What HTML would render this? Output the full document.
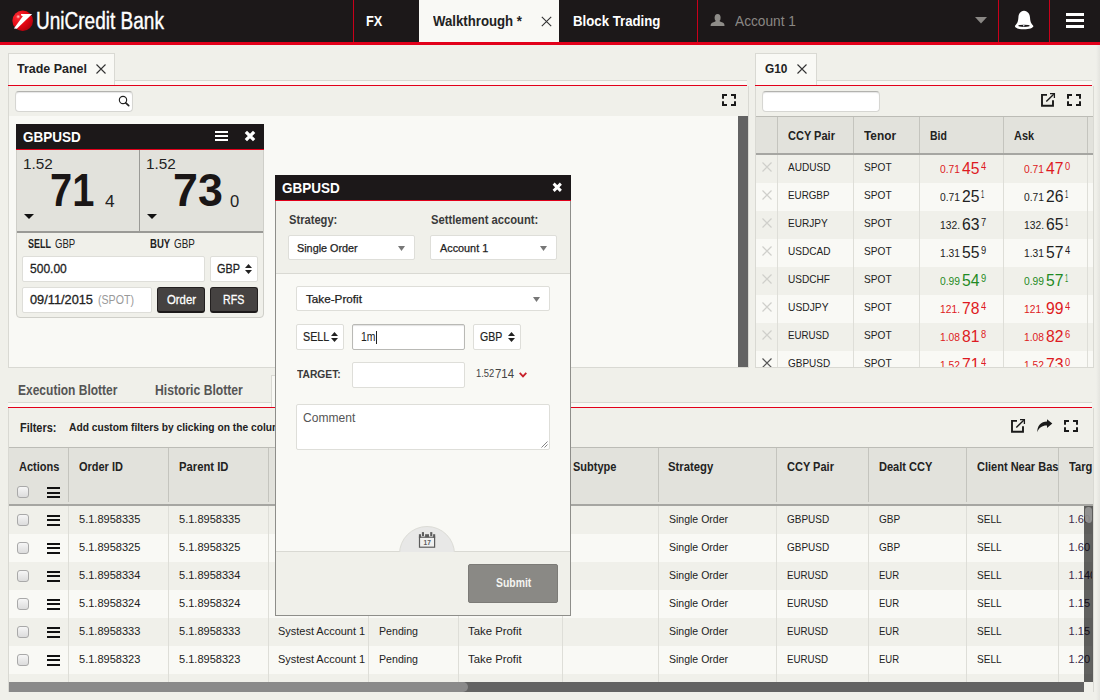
<!DOCTYPE html><html><head><meta charset="utf-8"><title>UniCredit Bank FX</title><style>*{margin:0;padding:0}html,body{width:1100px;height:700px;overflow:hidden;background:#f0f0ea;font-family:"Liberation Sans",sans-serif}
.r{position:absolute;display:block}.t{position:absolute;white-space:nowrap;transform-origin:0 50%;display:block}
.inp{background:#fff;border:1px solid #d6d6d2;border-top-color:#b2b2ae;border-radius:4px;box-sizing:border-box;box-shadow:inset 0 1px 1px rgba(0,0,0,.1)}
.inp2{background:#fff;border:1px solid #deded9;border-radius:2px;box-sizing:border-box}
.btn{background:#454241;border-radius:3px;box-sizing:border-box;border:1px solid #221f1f;border-bottom:2px solid #1c1919}
.chk{width:12px;height:12px;box-sizing:border-box;border:1px solid #a9a9a9;border-radius:3px;background:linear-gradient(#f6f6f6,#dcdcdc)}
</style></head><body>
<div class="r" style="left:0px;top:0px;width:1100px;height:42px;background:#1c1819;"></div>
<div class="r" style="left:0px;top:42px;width:1100px;height:3px;background:#e2001a;"></div>
<div class="r" style="left:353px;top:0px;width:1px;height:42px;background:#c8001a;"></div>
<div class="r" style="left:697px;top:0px;width:1px;height:42px;background:#c8001a;"></div>
<div class="r" style="left:998px;top:0px;width:1px;height:42px;background:#c8001a;"></div>
<div class="r" style="left:1049px;top:0px;width:1px;height:42px;background:#c8001a;"></div>
<div class="r" style="left:419px;top:0px;width:140px;height:42px;background:#f9f9f5;"></div>
<svg class="r" style="left:11px;top:9px" width="24" height="24" viewBox="0 0 24 24"><defs><radialGradient id="lg" cx="0.28" cy="0.3" r="0.85"><stop offset="0" stop-color="#ffd0d0"/><stop offset="0.12" stop-color="#f5232c"/><stop offset="0.55" stop-color="#e30613"/><stop offset="1" stop-color="#a8000c"/></radialGradient></defs><circle cx="11.7" cy="11.8" r="10.3" fill="url(#lg)"/><path d="M10.1 5.1L21.2 4.9L5.8 19.7L2.9 19.4L11.8 7.3L9.9 6.2Z" fill="#fff"/></svg>
<span class="t" style="left:35.60px;top:10.13px;font-size:23px;line-height:23px;color:#fff;transform:scaleX(0.8271);-webkit-text-stroke:0.4px #fff;">UniCredit Bank</span>
<span class="t" style="left:366.20px;top:14.15px;font-size:14px;line-height:14px;color:#fff;font-weight:bold;transform:scaleX(0.9119);">FX</span>
<span class="t" style="left:433.00px;top:14.15px;font-size:14px;line-height:14px;color:#222;font-weight:bold;transform:scaleX(0.9430);">Walkthrough *</span>
<svg class="r" style="left:541px;top:16px" width="11" height="11" viewBox="0 0 11 11"><path d="M0.8 0.8L10.2 10.2M10.2 0.8L0.8 10.2" stroke="#333" stroke-width="1.1" fill="none"/></svg>
<span class="t" style="left:572.60px;top:14.15px;font-size:14px;line-height:14px;color:#fff;font-weight:bold;transform:scaleX(0.9442);">Block Trading</span>
<svg class="r" style="left:710px;top:13px" width="15" height="14" viewBox="0 0 15 14"><ellipse cx="7.600" cy="4.700" rx="3" ry="3.800" fill="#8e8c88"/><path d="M0.600 13C0.600 10.500 1.500 9.800 3.500 9.200C5.500 8.600 6.100 8.200 6.100 7H9.100C9.100 8.200 9.900 8.600 11.900 9.200C13.900 9.800 14.500 10.500 14.500 13Z" fill="#8e8c88"/></svg>
<span class="t" style="left:734.60px;top:12.50px;font-size:15px;line-height:15px;color:#8a8784;transform:scaleX(0.9132);">Account 1</span>
<svg class="r" style="left:975px;top:17px" width="12" height="7" viewBox="0 0 12 7"><path d="M0 0H12L6 6.6Z" fill="#8a8784"/></svg>
<svg class="r" style="left:1014px;top:10px" width="20" height="20" viewBox="0 0 20 20"><path d="M10 0.700C6 1.300 4.600 4 4.400 7.500C4.200 11 3.500 13.500 0.900 16C0.900 18 5 19.300 10 19.300C15 19.300 19.400 18 19.400 16C16.800 13.500 16.200 11 16 7.500C15.800 4 14 1.300 10 0.700Z" fill="#fff"/><ellipse cx="10" cy="15.800" rx="5.700" ry="1.100" fill="#1c1819"/><circle cx="9.800" cy="15.700" r="0.800" fill="#e8f0ff"/></svg>
<div class="r" style="left:1066px;top:13px;width:18px;height:3.2px;background:#fff;"></div>
<div class="r" style="left:1066px;top:19px;width:18px;height:3.2px;background:#fff;"></div>
<div class="r" style="left:1066px;top:25px;width:18px;height:3.2px;background:#fff;"></div>
<div class="r" style="left:8px;top:80px;width:739px;height:6px;background:#f9f9f5;border-top:1px solid #d9d9d3;box-sizing:border-box;"></div>
<div class="r" style="left:8px;top:86px;width:741px;height:282px;background:#f9f9f5;border:1px solid #d9d9d3;border-top:none;box-sizing:border-box;"></div>
<div class="r" style="left:8px;top:53px;width:107px;height:33px;background:#f9f9f5;border:1px solid #d9d9d3;border-bottom:none;box-sizing:border-box;"></div>
<span class="t" style="left:17.40px;top:61.80px;font-size:13px;line-height:13px;color:#222;font-weight:bold;transform:scaleX(0.9589);">Trade Panel</span>
<svg class="r" style="left:96px;top:63.5px" width="10" height="10" viewBox="0 0 10 10"><path d="M0.5 0.5L9.5 9.5M9.5 0.500L0.500 9.500" stroke="#333" stroke-width="1.1" fill="none"/></svg>
<div class="r" style="left:8px;top:85px;width:739px;height:1px;background:#e2001a;"></div>
<div class="r" style="left:9px;top:86px;width:739px;height:30px;background:#f0f0ea;"></div>
<div class="r inp" style="left:15px;top:91px;width:118px;height:21px"></div>
<svg class="r" style="left:118px;top:95px" width="12" height="12" viewBox="0 0 12 12"><circle cx="5" cy="5" r="3.650" stroke="#222" stroke-width="1.150" fill="none"/><path d="M7.700 7.800L10.700 10.600" stroke="#222" stroke-width="1.700" stroke-linecap="round"/></svg>
<svg class="r" style="left:722px;top:94px" width="14" height="12" viewBox="0 0 14 12"><path d="M1 4.750V1H5M9 1H13V4.750M13 7.25V11H9M5 11H1V7.25" stroke="#1a1a1a" stroke-width="2" fill="none"/></svg>
<div class="r" style="left:738px;top:116px;width:10px;height:251px;background:#636363;"></div>
<div class="r" style="left:16px;top:124px;width:248px;height:194px;background:#f0f0ea;border:1px solid #cfcfc9;box-sizing:border-box;border-radius:0 0 4px 4px;"></div>
<div class="r" style="left:16px;top:124px;width:248px;height:25px;background:#1c1819;"></div>
<div class="r" style="left:16px;top:149px;width:248px;height:1px;background:#e2001a;"></div>
<div class="r" style="left:17px;top:150px;width:246px;height:81px;background:#e2e2dc;"></div>
<div class="r" style="left:139px;top:150px;width:1px;height:81px;background:#9a9a96;"></div>
<div class="r" style="left:17px;top:230.5px;width:246px;height:2px;background:#9a9a96;"></div>
<span class="t" style="left:23.20px;top:129.65px;font-size:14px;line-height:14px;color:#fff;font-weight:bold;transform:scaleX(0.9653);">GBPUSD</span>
<div class="r" style="left:215px;top:131px;width:13px;height:2px;background:#fff;"></div>
<div class="r" style="left:215px;top:135px;width:13px;height:2px;background:#fff;"></div>
<div class="r" style="left:215px;top:139px;width:13px;height:2px;background:#fff;"></div>
<svg class="r" style="left:244px;top:130px" width="12" height="12" viewBox="0 0 11 11"><path d="M1.700 1.700L9.300 9.300M9.300 1.700L1.700 9.300" stroke="#fff" stroke-width="3" fill="none"/></svg>
<span class="t" style="left:23.20px;top:156.58px;font-size:14.2px;line-height:14.2px;color:#222;transform:scaleX(1.0787);">1.52</span>
<span class="t" style="left:50.00px;top:168.21px;font-size:45.7px;line-height:45.7px;color:#1a1616;font-weight:bold;transform:scaleX(0.8718);">71</span>
<span class="t" style="left:105.40px;top:192.51px;font-size:17px;line-height:17px;color:#222;transform:scaleX(1.0172);">4</span>
<svg class="r" style="left:24px;top:214px" width="10" height="5" viewBox="0 0 10 5"><path d="M0 0H10L5 5Z" fill="#111"/></svg>
<span class="t" style="left:146.20px;top:156.58px;font-size:14.2px;line-height:14.2px;color:#222;transform:scaleX(1.0787);">1.52</span>
<span class="t" style="left:172.60px;top:168.21px;font-size:45.7px;line-height:45.7px;color:#1a1616;font-weight:bold;transform:scaleX(0.9801);">73</span>
<span class="t" style="left:229.60px;top:192.51px;font-size:17px;line-height:17px;color:#222;transform:scaleX(0.9748);">0</span>
<svg class="r" style="left:147px;top:214px" width="10" height="5" viewBox="0 0 10 5"><path d="M0 0H10L5 5Z" fill="#111"/></svg>
<span class="t" style="left:27.60px;top:238.44px;font-size:12px;line-height:12px;color:#222;font-weight:bold;transform:scaleX(0.7462);">SELL</span>
<span class="t" style="left:54.80px;top:238.44px;font-size:12px;line-height:12px;color:#222;transform:scaleX(0.7980);">GBP</span>
<span class="t" style="left:150.30px;top:238.44px;font-size:12px;line-height:12px;color:#222;font-weight:bold;transform:scaleX(0.7980);">BUY</span>
<span class="t" style="left:174.30px;top:238.44px;font-size:12px;line-height:12px;color:#222;transform:scaleX(0.8178);">GBP</span>
<div class="r inp2" style="left:22px;top:256px;width:183px;height:26px"></div>
<span class="t" style="left:29.70px;top:262.20px;font-size:13px;line-height:13px;color:#222;transform:scaleX(0.9258);-webkit-text-stroke:0.3px;">500.00</span>
<div class="r inp2" style="left:210px;top:256px;width:48px;height:26px"></div>
<span class="t" style="left:216.50px;top:262.20px;font-size:13px;line-height:13px;color:#222;transform:scaleX(0.8383);-webkit-text-stroke:0.3px;">GBP</span>
<svg class="r" style="left:245px;top:263.6px" width="7" height="10" viewBox="0 0 7 10"><path d="M0 4L3.500 0L7 4ZM0 6L3.500 10L7 6Z" fill="#222"/></svg>
<div class="r inp2" style="left:22px;top:287px;width:130px;height:26px"></div>
<span class="t" style="left:29.50px;top:293.30px;font-size:13px;line-height:13px;color:#222;transform:scaleX(0.9825);-webkit-text-stroke:0.3px;">09/11/2015</span>
<span class="t" style="left:97.50px;top:293.30px;font-size:13px;line-height:13px;color:#999;transform:scaleX(0.8170);">(SPOT)</span>
<div class="r btn" style="left:157px;top:287px;width:48px;height:26px"></div>
<div class="r btn" style="left:210px;top:287px;width:48px;height:26px"></div>
<span class="t" style="left:166.50px;top:293.30px;font-size:13px;line-height:13px;color:#fff;transform:scaleX(0.8722);-webkit-text-stroke:0.3px;">Order</span>
<span class="t" style="left:223.30px;top:293.30px;font-size:13px;line-height:13px;color:#fff;transform:scaleX(0.8154);-webkit-text-stroke:0.3px;">RFS</span>
<div class="r" style="left:755px;top:80px;width:337px;height:6px;background:#f9f9f5;border-top:1px solid #d9d9d3;box-sizing:border-box;"></div>
<div class="r" style="left:755px;top:86px;width:339px;height:282px;background:#f9f9f5;border:1px solid #d9d9d3;border-top:none;box-sizing:border-box;"></div>
<div class="r" style="left:755px;top:53px;width:62px;height:33px;background:#f9f9f5;border:1px solid #d9d9d3;border-bottom:none;box-sizing:border-box;"></div>
<span class="t" style="left:764.60px;top:61.80px;font-size:13px;line-height:13px;color:#222;font-weight:bold;transform:scaleX(0.9120);">G10</span>
<svg class="r" style="left:797px;top:63.5px" width="10" height="10" viewBox="0 0 10 10"><path d="M0.5 0.5L9.5 9.5M9.5 0.500L0.500 9.500" stroke="#333" stroke-width="1.1" fill="none"/></svg>
<div class="r" style="left:755px;top:85px;width:337px;height:1px;background:#e2001a;"></div>
<div class="r" style="left:756px;top:86px;width:337px;height:30px;background:#f0f0ea;"></div>
<div class="r inp" style="left:762px;top:91px;width:118px;height:21px"></div>
<svg class="r" style="left:1040px;top:92px" width="16" height="16" viewBox="0 0 16 16"><path d="M7 2.900H2V13.750H13V8.250" stroke="#1a1a1a" stroke-width="1.900" fill="none"/><path d="M6.300 9.500L13.700 2.300" stroke="#1a1a1a" stroke-width="1.400"/><path d="M10 1.600H14.400V5.900" stroke="#1a1a1a" stroke-width="1.300" fill="none"/></svg>
<svg class="r" style="left:1067px;top:94px" width="14" height="12" viewBox="0 0 14 12"><path d="M1 4.750V1H5M9 1H13V4.750M13 7.25V11H9M5 11H1V7.25" stroke="#1a1a1a" stroke-width="2" fill="none"/></svg>
<div class="r" style="left:756px;top:116px;width:337px;height:37px;background:#e2e2dc;"></div>
<div class="r" style="left:756px;top:116px;width:337px;height:1px;background:#bcbcb6;"></div>
<div class="r" style="left:756px;top:153px;width:337px;height:2px;background:#a6a6a2;"></div>
<div class="r" style="left:777px;top:117px;width:1px;height:36px;background:#c4c4be;"></div>
<div class="r" style="left:853px;top:117px;width:1px;height:36px;background:#c4c4be;"></div>
<div class="r" style="left:919px;top:117px;width:1px;height:36px;background:#c4c4be;"></div>
<div class="r" style="left:1003px;top:117px;width:1px;height:36px;background:#c4c4be;"></div>
<div class="r" style="left:1087px;top:117px;width:1px;height:36px;background:#c4c4be;"></div>
<span class="t" style="left:787.60px;top:129.84px;font-size:12px;line-height:12px;color:#222;font-weight:bold;transform:scaleX(0.9174);">CCY Pair</span>
<span class="t" style="left:863.50px;top:129.84px;font-size:12px;line-height:12px;color:#222;font-weight:bold;transform:scaleX(0.9865);">Tenor</span>
<span class="t" style="left:929.70px;top:129.84px;font-size:12px;line-height:12px;color:#222;font-weight:bold;transform:scaleX(0.8699);">Bid</span>
<span class="t" style="left:1013.50px;top:129.84px;font-size:12px;line-height:12px;color:#222;font-weight:bold;transform:scaleX(0.9091);">Ask</span>
<div class="r" style="left:756px;top:155px;width:337px;height:212px;overflow:hidden">
<div class="r" style="left:0px;top:0px;width:337px;height:28px;background:#f0f0ea;"></div>
<svg class="r" style="left:6px;top:7px" width="10" height="10" viewBox="0 0 10 10"><path d="M0.500 0.500L9.500 9.500M9.500 0.500L0.500 9.500" stroke="#cfcfcb" stroke-width="1.200" fill="none"/></svg>
<span class="t" style="left:31.60px;top:7.29px;font-size:11px;line-height:11px;color:#222;transform:scaleX(0.9127);">AUDUSD</span>
<span class="t" style="left:107.60px;top:7.29px;font-size:11px;line-height:11px;color:#222;transform:scaleX(0.9212);">SPOT</span>
<span class="t" style="left:184.30px;top:9.98px;font-size:10.3px;line-height:10.3px;color:#de1a22;transform:scaleX(0.9969);">0.71</span>
<span class="t" style="left:206.10px;top:6.01px;font-size:15.7px;line-height:15.7px;color:#de1a22;">45</span>
<span class="t" style="left:224.50px;top:6.67px;font-size:10.2px;line-height:10.2px;color:#de1a22;transform:scaleX(0.9143);">4</span>
<span class="t" style="left:268.30px;top:9.98px;font-size:10.3px;line-height:10.3px;color:#de1a22;transform:scaleX(0.9969);">0.71</span>
<span class="t" style="left:290.10px;top:6.01px;font-size:15.7px;line-height:15.7px;color:#de1a22;">47</span>
<span class="t" style="left:308.50px;top:6.67px;font-size:10.2px;line-height:10.2px;color:#de1a22;transform:scaleX(0.9143);">0</span>
<div class="r" style="left:0px;top:28px;width:337px;height:28px;background:#f9f9f5;"></div>
<svg class="r" style="left:6px;top:35px" width="10" height="10" viewBox="0 0 10 10"><path d="M0.500 0.500L9.500 9.500M9.500 0.500L0.500 9.500" stroke="#cfcfcb" stroke-width="1.200" fill="none"/></svg>
<span class="t" style="left:31.60px;top:35.29px;font-size:11px;line-height:11px;color:#222;transform:scaleX(0.8920);">EURGBP</span>
<span class="t" style="left:107.60px;top:35.29px;font-size:11px;line-height:11px;color:#222;transform:scaleX(0.9212);">SPOT</span>
<span class="t" style="left:184.30px;top:37.98px;font-size:10.3px;line-height:10.3px;color:#222;transform:scaleX(0.9969);">0.71</span>
<span class="t" style="left:206.10px;top:34.01px;font-size:15.7px;line-height:15.7px;color:#222;">25</span>
<span class="t" style="left:224.50px;top:34.67px;font-size:10.2px;line-height:10.2px;color:#222;transform:scaleX(0.5626);">1</span>
<span class="t" style="left:268.30px;top:37.98px;font-size:10.3px;line-height:10.3px;color:#222;transform:scaleX(0.9969);">0.71</span>
<span class="t" style="left:290.10px;top:34.01px;font-size:15.7px;line-height:15.7px;color:#222;">26</span>
<span class="t" style="left:308.50px;top:34.67px;font-size:10.2px;line-height:10.2px;color:#222;transform:scaleX(0.5626);">1</span>
<div class="r" style="left:0px;top:56px;width:337px;height:28px;background:#f0f0ea;"></div>
<svg class="r" style="left:6px;top:63px" width="10" height="10" viewBox="0 0 10 10"><path d="M0.500 0.500L9.500 9.500M9.500 0.500L0.500 9.500" stroke="#cfcfcb" stroke-width="1.200" fill="none"/></svg>
<span class="t" style="left:31.60px;top:63.29px;font-size:11px;line-height:11px;color:#222;transform:scaleX(0.9164);">EURJPY</span>
<span class="t" style="left:107.60px;top:63.29px;font-size:11px;line-height:11px;color:#222;transform:scaleX(0.9212);">SPOT</span>
<span class="t" style="left:184.30px;top:65.98px;font-size:10.3px;line-height:10.3px;color:#222;transform:scaleX(0.9969);">132.</span>
<span class="t" style="left:206.10px;top:62.01px;font-size:15.7px;line-height:15.7px;color:#222;">63</span>
<span class="t" style="left:224.50px;top:62.67px;font-size:10.2px;line-height:10.2px;color:#222;transform:scaleX(0.9143);">7</span>
<span class="t" style="left:268.30px;top:65.98px;font-size:10.3px;line-height:10.3px;color:#222;transform:scaleX(0.9969);">132.</span>
<span class="t" style="left:290.10px;top:62.01px;font-size:15.7px;line-height:15.7px;color:#222;">65</span>
<span class="t" style="left:308.50px;top:62.67px;font-size:10.2px;line-height:10.2px;color:#222;transform:scaleX(0.5626);">1</span>
<div class="r" style="left:0px;top:84px;width:337px;height:28px;background:#f9f9f5;"></div>
<svg class="r" style="left:6px;top:91px" width="10" height="10" viewBox="0 0 10 10"><path d="M0.500 0.500L9.500 9.500M9.500 0.500L0.500 9.500" stroke="#cfcfcb" stroke-width="1.200" fill="none"/></svg>
<span class="t" style="left:31.60px;top:91.29px;font-size:11px;line-height:11px;color:#222;transform:scaleX(0.9132);">USDCAD</span>
<span class="t" style="left:107.60px;top:91.29px;font-size:11px;line-height:11px;color:#222;transform:scaleX(0.9212);">SPOT</span>
<span class="t" style="left:184.30px;top:93.98px;font-size:10.3px;line-height:10.3px;color:#222;transform:scaleX(0.9969);">1.31</span>
<span class="t" style="left:206.10px;top:90.01px;font-size:15.7px;line-height:15.7px;color:#222;">55</span>
<span class="t" style="left:224.50px;top:90.67px;font-size:10.2px;line-height:10.2px;color:#222;transform:scaleX(0.9143);">9</span>
<span class="t" style="left:268.30px;top:93.98px;font-size:10.3px;line-height:10.3px;color:#222;transform:scaleX(0.9969);">1.31</span>
<span class="t" style="left:290.10px;top:90.01px;font-size:15.7px;line-height:15.7px;color:#222;">57</span>
<span class="t" style="left:308.50px;top:90.67px;font-size:10.2px;line-height:10.2px;color:#222;transform:scaleX(0.9143);">4</span>
<div class="r" style="left:0px;top:112px;width:337px;height:28px;background:#f0f0ea;"></div>
<svg class="r" style="left:6px;top:119px" width="10" height="10" viewBox="0 0 10 10"><path d="M0.500 0.500L9.500 9.500M9.500 0.500L0.500 9.500" stroke="#cfcfcb" stroke-width="1.200" fill="none"/></svg>
<span class="t" style="left:31.60px;top:119.29px;font-size:11px;line-height:11px;color:#222;transform:scaleX(0.9153);">USDCHF</span>
<span class="t" style="left:107.60px;top:119.29px;font-size:11px;line-height:11px;color:#222;transform:scaleX(0.9212);">SPOT</span>
<span class="t" style="left:184.30px;top:121.98px;font-size:10.3px;line-height:10.3px;color:#1f8a24;transform:scaleX(0.9969);">0.99</span>
<span class="t" style="left:206.10px;top:118.01px;font-size:15.7px;line-height:15.7px;color:#1f8a24;">54</span>
<span class="t" style="left:224.50px;top:118.67px;font-size:10.2px;line-height:10.2px;color:#1f8a24;transform:scaleX(0.9143);">9</span>
<span class="t" style="left:268.30px;top:121.98px;font-size:10.3px;line-height:10.3px;color:#1f8a24;transform:scaleX(0.9969);">0.99</span>
<span class="t" style="left:290.10px;top:118.01px;font-size:15.7px;line-height:15.7px;color:#1f8a24;">57</span>
<span class="t" style="left:308.50px;top:118.67px;font-size:10.2px;line-height:10.2px;color:#1f8a24;transform:scaleX(0.5626);">1</span>
<div class="r" style="left:0px;top:140px;width:337px;height:28px;background:#f9f9f5;"></div>
<svg class="r" style="left:6px;top:147px" width="10" height="10" viewBox="0 0 10 10"><path d="M0.500 0.500L9.500 9.500M9.500 0.500L0.500 9.500" stroke="#cfcfcb" stroke-width="1.200" fill="none"/></svg>
<span class="t" style="left:31.60px;top:147.29px;font-size:11px;line-height:11px;color:#222;transform:scaleX(0.9329);">USDJPY</span>
<span class="t" style="left:107.60px;top:147.29px;font-size:11px;line-height:11px;color:#222;transform:scaleX(0.9212);">SPOT</span>
<span class="t" style="left:184.30px;top:149.98px;font-size:10.3px;line-height:10.3px;color:#de1a22;transform:scaleX(0.9969);">121.</span>
<span class="t" style="left:206.10px;top:146.01px;font-size:15.7px;line-height:15.7px;color:#de1a22;">78</span>
<span class="t" style="left:224.50px;top:146.67px;font-size:10.2px;line-height:10.2px;color:#de1a22;transform:scaleX(0.9143);">4</span>
<span class="t" style="left:268.30px;top:149.98px;font-size:10.3px;line-height:10.3px;color:#de1a22;transform:scaleX(0.9969);">121.</span>
<span class="t" style="left:290.10px;top:146.01px;font-size:15.7px;line-height:15.7px;color:#de1a22;">99</span>
<span class="t" style="left:308.50px;top:146.67px;font-size:10.2px;line-height:10.2px;color:#de1a22;transform:scaleX(0.9143);">4</span>
<div class="r" style="left:0px;top:168px;width:337px;height:28px;background:#f0f0ea;"></div>
<svg class="r" style="left:6px;top:175px" width="10" height="10" viewBox="0 0 10 10"><path d="M0.500 0.500L9.500 9.500M9.500 0.500L0.500 9.500" stroke="#cfcfcb" stroke-width="1.200" fill="none"/></svg>
<span class="t" style="left:31.60px;top:175.29px;font-size:11px;line-height:11px;color:#222;transform:scaleX(0.8833);">EURUSD</span>
<span class="t" style="left:107.60px;top:175.29px;font-size:11px;line-height:11px;color:#222;transform:scaleX(0.9212);">SPOT</span>
<span class="t" style="left:184.30px;top:177.98px;font-size:10.3px;line-height:10.3px;color:#de1a22;transform:scaleX(0.9969);">1.08</span>
<span class="t" style="left:206.10px;top:174.01px;font-size:15.7px;line-height:15.7px;color:#de1a22;">81</span>
<span class="t" style="left:224.50px;top:174.67px;font-size:10.2px;line-height:10.2px;color:#de1a22;transform:scaleX(0.9143);">8</span>
<span class="t" style="left:268.30px;top:177.98px;font-size:10.3px;line-height:10.3px;color:#de1a22;transform:scaleX(0.9969);">1.08</span>
<span class="t" style="left:290.10px;top:174.01px;font-size:15.7px;line-height:15.7px;color:#de1a22;">82</span>
<span class="t" style="left:308.50px;top:174.67px;font-size:10.2px;line-height:10.2px;color:#de1a22;transform:scaleX(0.9143);">6</span>
<div class="r" style="left:0px;top:196px;width:337px;height:28px;background:#f9f9f5;"></div>
<svg class="r" style="left:6px;top:203px" width="10" height="10" viewBox="0 0 10 10"><path d="M0.500 0.500L9.500 9.500M9.500 0.500L0.500 9.500" stroke="#555" stroke-width="1.200" fill="none"/></svg>
<span class="t" style="left:31.60px;top:203.29px;font-size:11px;line-height:11px;color:#222;transform:scaleX(0.9074);">GBPUSD</span>
<span class="t" style="left:107.60px;top:203.29px;font-size:11px;line-height:11px;color:#222;transform:scaleX(0.9212);">SPOT</span>
<span class="t" style="left:184.30px;top:205.98px;font-size:10.3px;line-height:10.3px;color:#de1a22;transform:scaleX(0.9969);">1.52</span>
<span class="t" style="left:206.10px;top:202.01px;font-size:15.7px;line-height:15.7px;color:#de1a22;">71</span>
<span class="t" style="left:224.50px;top:202.67px;font-size:10.2px;line-height:10.2px;color:#de1a22;transform:scaleX(0.9143);">4</span>
<span class="t" style="left:268.30px;top:205.98px;font-size:10.3px;line-height:10.3px;color:#de1a22;transform:scaleX(0.9969);">1.52</span>
<span class="t" style="left:290.10px;top:202.01px;font-size:15.7px;line-height:15.7px;color:#de1a22;">73</span>
<span class="t" style="left:308.50px;top:202.67px;font-size:10.2px;line-height:10.2px;color:#de1a22;transform:scaleX(0.9143);">0</span>
<div class="r" style="left:21px;top:0px;width:1px;height:213px;background:#deded8;"></div>
<div class="r" style="left:97px;top:0px;width:1px;height:213px;background:#deded8;"></div>
<div class="r" style="left:163px;top:0px;width:1px;height:213px;background:#deded8;"></div>
<div class="r" style="left:247px;top:0px;width:1px;height:213px;background:#deded8;"></div>
<div class="r" style="left:331px;top:0px;width:1px;height:213px;background:#deded8;"></div>
</div>
<div class="r" style="left:8px;top:402px;width:1084px;height:6px;background:#f9f9f5;border-top:1px solid #d9d9d3;box-sizing:border-box;"></div>
<div class="r" style="left:271px;top:375px;width:40px;height:33px;background:#f9f9f5;border:1px solid #d9d9d3;border-bottom:none;box-sizing:border-box;"></div>
<span class="t" style="left:17.60px;top:383.25px;font-size:14px;line-height:14px;color:#555;font-weight:bold;transform:scaleX(0.8578);">Execution Blotter</span>
<span class="t" style="left:155.20px;top:383.25px;font-size:14px;line-height:14px;color:#555;font-weight:bold;transform:scaleX(0.8682);">Historic Blotter</span>
<div class="r" style="left:8px;top:407px;width:1084px;height:1px;background:#e2001a;"></div>
<div class="r" style="left:8px;top:408px;width:1086px;height:284px;background:#f0f0ea;border-left:1px solid #d9d9d3;border-right:1px solid #d9d9d3;box-sizing:border-box;"></div>
<span class="t" style="left:19.60px;top:421.84px;font-size:12px;line-height:12px;color:#222;font-weight:bold;transform:scaleX(0.9100);">Filters:</span>
<span class="t" style="left:69.30px;top:422.27px;font-size:11.5px;line-height:11.5px;color:#222;font-weight:bold;transform:scaleX(0.8899);">Add custom filters by clicking on the column</span>
<svg class="r" style="left:1010px;top:418px" width="16" height="16" viewBox="0 0 16 16"><path d="M7 2.900H2V13.750H13V8.250" stroke="#1a1a1a" stroke-width="1.900" fill="none"/><path d="M6.300 9.500L13.700 2.300" stroke="#1a1a1a" stroke-width="1.400"/><path d="M10 1.600H14.400V5.900" stroke="#1a1a1a" stroke-width="1.300" fill="none"/></svg>
<svg class="r" style="left:1037px;top:419px" width="16" height="14" viewBox="0 0 16 14"><path d="M10 0.200L15.300 4.600L10 9V6.600C5.500 6.400 2 8.500 0.300 13.300C0 7 4 2.800 10 2.600Z" fill="#1a1a1a"/></svg>
<svg class="r" style="left:1064px;top:420px" width="14" height="12" viewBox="0 0 14 12"><path d="M1 4.750V1H5M9 1H13V4.750M13 7.25V11H9M5 11H1V7.25" stroke="#1a1a1a" stroke-width="2" fill="none"/></svg>
<div class="r" style="left:9px;top:447px;width:1084px;height:57px;background:#e2e2dc;"></div>
<div class="r" style="left:9px;top:447px;width:1084px;height:1px;background:#bcbcb6;"></div>
<div class="r" style="left:9px;top:504px;width:1084px;height:2px;background:#a6a6a2;"></div>
<div class="r" style="left:68px;top:448px;width:1px;height:54px;background:#c4c4be;"></div>
<div class="r" style="left:168px;top:448px;width:1px;height:54px;background:#c4c4be;"></div>
<div class="r" style="left:268px;top:448px;width:1px;height:54px;background:#c4c4be;"></div>
<div class="r" style="left:368px;top:448px;width:1px;height:54px;background:#c4c4be;"></div>
<div class="r" style="left:458px;top:448px;width:1px;height:54px;background:#c4c4be;"></div>
<div class="r" style="left:562px;top:448px;width:1px;height:54px;background:#c4c4be;"></div>
<div class="r" style="left:658px;top:448px;width:1px;height:54px;background:#c4c4be;"></div>
<div class="r" style="left:776px;top:448px;width:1px;height:54px;background:#c4c4be;"></div>
<div class="r" style="left:868px;top:448px;width:1px;height:54px;background:#c4c4be;"></div>
<div class="r" style="left:966px;top:448px;width:1px;height:54px;background:#c4c4be;"></div>
<div class="r" style="left:1058px;top:448px;width:1px;height:54px;background:#c4c4be;"></div>
<span class="t" style="left:18.60px;top:460.54px;font-size:12px;line-height:12px;color:#222;font-weight:bold;transform:scaleX(0.9182);">Actions</span>
<span class="t" style="left:78.60px;top:460.54px;font-size:12px;line-height:12px;color:#222;font-weight:bold;transform:scaleX(0.9146);">Order ID</span>
<span class="t" style="left:178.60px;top:460.54px;font-size:12px;line-height:12px;color:#222;font-weight:bold;transform:scaleX(0.9376);">Parent ID</span>
<span class="t" style="left:572.60px;top:460.54px;font-size:12px;line-height:12px;color:#222;font-weight:bold;transform:scaleX(0.9173);">Subtype</span>
<span class="t" style="left:668.20px;top:460.54px;font-size:12px;line-height:12px;color:#222;font-weight:bold;transform:scaleX(0.9437);">Strategy</span>
<span class="t" style="left:786.60px;top:460.54px;font-size:12px;line-height:12px;color:#222;font-weight:bold;transform:scaleX(0.9174);">CCY Pair</span>
<span class="t" style="left:878.60px;top:460.54px;font-size:12px;line-height:12px;color:#222;font-weight:bold;transform:scaleX(0.9207);">Dealt CCY</span>
<span class="t" style="left:976.60px;top:460.54px;font-size:12px;line-height:12px;color:#222;font-weight:bold;transform:scaleX(0.9178);">Client Near Bas</span>
<span class="t" style="left:1068.60px;top:460.54px;font-size:12px;line-height:12px;color:#222;font-weight:bold;transform:scaleX(0.9313);">Targ</span>
<div class="r chk" style="left:17px;top:486px"></div>
<div class="r" style="left:47px;top:487.0px;width:13px;height:2.2px;background:#111;"></div>
<div class="r" style="left:47px;top:491.5px;width:13px;height:2.2px;background:#111;"></div>
<div class="r" style="left:47px;top:496.0px;width:13px;height:2.2px;background:#111;"></div>
<div class="r" style="left:9px;top:506px;width:1083px;height:176px;overflow:hidden">
<div class="r" style="left:0px;top:0px;width:1083px;height:28px;background:#f0f0ea;"></div>
<div class="r chk" style="left:8px;top:8px"></div>
<div class="r" style="left:38px;top:8.5px;width:13px;height:2.2px;background:#111;"></div>
<div class="r" style="left:38px;top:13.0px;width:13px;height:2.2px;background:#111;"></div>
<div class="r" style="left:38px;top:17.5px;width:13px;height:2.2px;background:#111;"></div>
<span class="t" style="left:69.60px;top:8.29px;font-size:11px;line-height:11px;color:#222;transform:scaleX(1.0033);">5.1.8958335</span>
<span class="t" style="left:169.60px;top:8.29px;font-size:11px;line-height:11px;color:#222;transform:scaleX(1.0033);">5.1.8958335</span>
<span class="t" style="left:269.40px;top:8.29px;font-size:11px;line-height:11px;color:#222;transform:scaleX(0.9961);">Systest Account 1</span>
<span class="t" style="left:369.50px;top:8.29px;font-size:11px;line-height:11px;color:#222;transform:scaleX(0.9659);">Pending</span>
<span class="t" style="left:459.30px;top:8.29px;font-size:11px;line-height:11px;color:#222;transform:scaleX(1.0327);">Take Profit</span>
<span class="t" style="left:659.50px;top:8.29px;font-size:11px;line-height:11px;color:#222;transform:scaleX(0.9555);">Single Order</span>
<span class="t" style="left:777.60px;top:8.29px;font-size:11px;line-height:11px;color:#222;transform:scaleX(0.9074);">GBPUSD</span>
<span class="t" style="left:869.60px;top:8.29px;font-size:11px;line-height:11px;color:#222;transform:scaleX(0.9161);">GBP</span>
<span class="t" style="left:967.60px;top:8.29px;font-size:11px;line-height:11px;color:#222;transform:scaleX(0.9147);">SELL</span>
<span class="t" style="left:1059.60px;top:8.29px;font-size:11px;line-height:11px;color:#3a2a4a;">1.60</span>
<div class="r" style="left:0px;top:28px;width:1083px;height:28px;background:#f9f9f5;"></div>
<div class="r chk" style="left:8px;top:36px"></div>
<div class="r" style="left:38px;top:36.5px;width:13px;height:2.2px;background:#111;"></div>
<div class="r" style="left:38px;top:41.0px;width:13px;height:2.2px;background:#111;"></div>
<div class="r" style="left:38px;top:45.5px;width:13px;height:2.2px;background:#111;"></div>
<span class="t" style="left:69.60px;top:36.29px;font-size:11px;line-height:11px;color:#222;transform:scaleX(1.0033);">5.1.8958325</span>
<span class="t" style="left:169.60px;top:36.29px;font-size:11px;line-height:11px;color:#222;transform:scaleX(1.0033);">5.1.8958325</span>
<span class="t" style="left:269.40px;top:36.29px;font-size:11px;line-height:11px;color:#222;transform:scaleX(0.9961);">Systest Account 1</span>
<span class="t" style="left:369.50px;top:36.29px;font-size:11px;line-height:11px;color:#222;transform:scaleX(0.9659);">Pending</span>
<span class="t" style="left:459.30px;top:36.29px;font-size:11px;line-height:11px;color:#222;transform:scaleX(1.0327);">Take Profit</span>
<span class="t" style="left:659.50px;top:36.29px;font-size:11px;line-height:11px;color:#222;transform:scaleX(0.9555);">Single Order</span>
<span class="t" style="left:777.60px;top:36.29px;font-size:11px;line-height:11px;color:#222;transform:scaleX(0.9074);">GBPUSD</span>
<span class="t" style="left:869.60px;top:36.29px;font-size:11px;line-height:11px;color:#222;transform:scaleX(0.9161);">GBP</span>
<span class="t" style="left:967.60px;top:36.29px;font-size:11px;line-height:11px;color:#222;transform:scaleX(0.9147);">SELL</span>
<span class="t" style="left:1059.60px;top:36.29px;font-size:11px;line-height:11px;color:#3a2a4a;">1.60</span>
<div class="r" style="left:0px;top:56px;width:1083px;height:28px;background:#f0f0ea;"></div>
<div class="r chk" style="left:8px;top:64px"></div>
<div class="r" style="left:38px;top:64.5px;width:13px;height:2.2px;background:#111;"></div>
<div class="r" style="left:38px;top:69.0px;width:13px;height:2.2px;background:#111;"></div>
<div class="r" style="left:38px;top:73.5px;width:13px;height:2.2px;background:#111;"></div>
<span class="t" style="left:69.60px;top:64.29px;font-size:11px;line-height:11px;color:#222;transform:scaleX(1.0033);">5.1.8958334</span>
<span class="t" style="left:169.60px;top:64.29px;font-size:11px;line-height:11px;color:#222;transform:scaleX(1.0033);">5.1.8958334</span>
<span class="t" style="left:269.40px;top:64.29px;font-size:11px;line-height:11px;color:#222;transform:scaleX(0.9961);">Systest Account 1</span>
<span class="t" style="left:369.50px;top:64.29px;font-size:11px;line-height:11px;color:#222;transform:scaleX(0.9659);">Pending</span>
<span class="t" style="left:459.30px;top:64.29px;font-size:11px;line-height:11px;color:#222;transform:scaleX(1.0327);">Take Profit</span>
<span class="t" style="left:659.50px;top:64.29px;font-size:11px;line-height:11px;color:#222;transform:scaleX(0.9555);">Single Order</span>
<span class="t" style="left:777.60px;top:64.29px;font-size:11px;line-height:11px;color:#222;transform:scaleX(0.8833);">EURUSD</span>
<span class="t" style="left:869.60px;top:64.29px;font-size:11px;line-height:11px;color:#222;transform:scaleX(0.8679);">EUR</span>
<span class="t" style="left:967.60px;top:64.29px;font-size:11px;line-height:11px;color:#222;transform:scaleX(0.9147);">SELL</span>
<span class="t" style="left:1059.60px;top:64.29px;font-size:11px;line-height:11px;color:#3a2a4a;">1.140</span>
<div class="r" style="left:0px;top:84px;width:1083px;height:28px;background:#f9f9f5;"></div>
<div class="r chk" style="left:8px;top:92px"></div>
<div class="r" style="left:38px;top:92.5px;width:13px;height:2.2px;background:#111;"></div>
<div class="r" style="left:38px;top:97.0px;width:13px;height:2.2px;background:#111;"></div>
<div class="r" style="left:38px;top:101.5px;width:13px;height:2.2px;background:#111;"></div>
<span class="t" style="left:69.60px;top:92.29px;font-size:11px;line-height:11px;color:#222;transform:scaleX(1.0033);">5.1.8958324</span>
<span class="t" style="left:169.60px;top:92.29px;font-size:11px;line-height:11px;color:#222;transform:scaleX(1.0033);">5.1.8958324</span>
<span class="t" style="left:269.40px;top:92.29px;font-size:11px;line-height:11px;color:#222;transform:scaleX(0.9961);">Systest Account 1</span>
<span class="t" style="left:369.50px;top:92.29px;font-size:11px;line-height:11px;color:#222;transform:scaleX(0.9659);">Pending</span>
<span class="t" style="left:459.30px;top:92.29px;font-size:11px;line-height:11px;color:#222;transform:scaleX(1.0327);">Take Profit</span>
<span class="t" style="left:659.50px;top:92.29px;font-size:11px;line-height:11px;color:#222;transform:scaleX(0.9555);">Single Order</span>
<span class="t" style="left:777.60px;top:92.29px;font-size:11px;line-height:11px;color:#222;transform:scaleX(0.8833);">EURUSD</span>
<span class="t" style="left:869.60px;top:92.29px;font-size:11px;line-height:11px;color:#222;transform:scaleX(0.8679);">EUR</span>
<span class="t" style="left:967.60px;top:92.29px;font-size:11px;line-height:11px;color:#222;transform:scaleX(0.9147);">SELL</span>
<span class="t" style="left:1059.60px;top:92.29px;font-size:11px;line-height:11px;color:#3a2a4a;">1.15</span>
<div class="r" style="left:0px;top:112px;width:1083px;height:28px;background:#f0f0ea;"></div>
<div class="r chk" style="left:8px;top:120px"></div>
<div class="r" style="left:38px;top:120.5px;width:13px;height:2.2px;background:#111;"></div>
<div class="r" style="left:38px;top:125.0px;width:13px;height:2.2px;background:#111;"></div>
<div class="r" style="left:38px;top:129.5px;width:13px;height:2.2px;background:#111;"></div>
<span class="t" style="left:69.60px;top:120.29px;font-size:11px;line-height:11px;color:#222;transform:scaleX(1.0033);">5.1.8958333</span>
<span class="t" style="left:169.60px;top:120.29px;font-size:11px;line-height:11px;color:#222;transform:scaleX(1.0033);">5.1.8958333</span>
<span class="t" style="left:269.40px;top:120.29px;font-size:11px;line-height:11px;color:#222;transform:scaleX(0.9961);">Systest Account 1</span>
<span class="t" style="left:369.50px;top:120.29px;font-size:11px;line-height:11px;color:#222;transform:scaleX(0.9659);">Pending</span>
<span class="t" style="left:459.30px;top:120.29px;font-size:11px;line-height:11px;color:#222;transform:scaleX(1.0327);">Take Profit</span>
<span class="t" style="left:659.50px;top:120.29px;font-size:11px;line-height:11px;color:#222;transform:scaleX(0.9555);">Single Order</span>
<span class="t" style="left:777.60px;top:120.29px;font-size:11px;line-height:11px;color:#222;transform:scaleX(0.8833);">EURUSD</span>
<span class="t" style="left:869.60px;top:120.29px;font-size:11px;line-height:11px;color:#222;transform:scaleX(0.8679);">EUR</span>
<span class="t" style="left:967.60px;top:120.29px;font-size:11px;line-height:11px;color:#222;transform:scaleX(0.9147);">SELL</span>
<span class="t" style="left:1059.60px;top:120.29px;font-size:11px;line-height:11px;color:#3a2a4a;">1.15</span>
<div class="r" style="left:0px;top:140px;width:1083px;height:28px;background:#f9f9f5;"></div>
<div class="r chk" style="left:8px;top:148px"></div>
<div class="r" style="left:38px;top:148.5px;width:13px;height:2.2px;background:#111;"></div>
<div class="r" style="left:38px;top:153.0px;width:13px;height:2.2px;background:#111;"></div>
<div class="r" style="left:38px;top:157.5px;width:13px;height:2.2px;background:#111;"></div>
<span class="t" style="left:69.60px;top:148.29px;font-size:11px;line-height:11px;color:#222;transform:scaleX(1.0033);">5.1.8958323</span>
<span class="t" style="left:169.60px;top:148.29px;font-size:11px;line-height:11px;color:#222;transform:scaleX(1.0033);">5.1.8958323</span>
<span class="t" style="left:269.40px;top:148.29px;font-size:11px;line-height:11px;color:#222;transform:scaleX(0.9961);">Systest Account 1</span>
<span class="t" style="left:369.50px;top:148.29px;font-size:11px;line-height:11px;color:#222;transform:scaleX(0.9659);">Pending</span>
<span class="t" style="left:459.30px;top:148.29px;font-size:11px;line-height:11px;color:#222;transform:scaleX(1.0327);">Take Profit</span>
<span class="t" style="left:659.50px;top:148.29px;font-size:11px;line-height:11px;color:#222;transform:scaleX(0.9555);">Single Order</span>
<span class="t" style="left:777.60px;top:148.29px;font-size:11px;line-height:11px;color:#222;transform:scaleX(0.8833);">EURUSD</span>
<span class="t" style="left:869.60px;top:148.29px;font-size:11px;line-height:11px;color:#222;transform:scaleX(0.8679);">EUR</span>
<span class="t" style="left:967.60px;top:148.29px;font-size:11px;line-height:11px;color:#222;transform:scaleX(0.9147);">SELL</span>
<span class="t" style="left:1059.60px;top:148.29px;font-size:11px;line-height:11px;color:#3a2a4a;">1.20</span>
<div class="r" style="left:0px;top:168px;width:1083px;height:28px;background:#f0f0ea;"></div>
<div class="r" style="left:59px;top:0px;width:1px;height:177px;background:#deded8;"></div>
<div class="r" style="left:159px;top:0px;width:1px;height:177px;background:#deded8;"></div>
<div class="r" style="left:259px;top:0px;width:1px;height:177px;background:#deded8;"></div>
<div class="r" style="left:359px;top:0px;width:1px;height:177px;background:#deded8;"></div>
<div class="r" style="left:449px;top:0px;width:1px;height:177px;background:#deded8;"></div>
<div class="r" style="left:553px;top:0px;width:1px;height:177px;background:#deded8;"></div>
<div class="r" style="left:649px;top:0px;width:1px;height:177px;background:#deded8;"></div>
<div class="r" style="left:767px;top:0px;width:1px;height:177px;background:#deded8;"></div>
<div class="r" style="left:859px;top:0px;width:1px;height:177px;background:#deded8;"></div>
<div class="r" style="left:957px;top:0px;width:1px;height:177px;background:#deded8;"></div>
<div class="r" style="left:1049px;top:0px;width:1px;height:177px;background:#deded8;"></div>
</div>
<div class="r" style="left:1083.5px;top:506px;width:9.5px;height:176px;background:rgba(0,0,0,.61);"></div>
<div class="r" style="left:1084.5px;top:507px;width:7.5px;height:16px;background:#9a9a9a;border-radius:4px;opacity:.85;"></div>
<div class="r" style="left:9px;top:682px;width:1074.5px;height:10px;background:#636363;"></div>
<div class="r" style="left:9px;top:682px;width:459px;height:10px;background:#8a8a8a;border-radius:0 5px 5px 0;"></div>
<div class="r" style="left:1083.5px;top:682px;width:9.5px;height:10px;background:#f0f0ea;"></div>
<div class="r" style="left:1096px;top:45px;width:4px;height:655px;background:linear-gradient(90deg,rgba(0,0,0,0),rgba(0,0,0,.05));"></div>
<div class="r" style="left:275px;top:175px;width:296px;height:441px;background:#f9f9f5;border:1px solid #8e8e8a;border-top:none;box-sizing:border-box;"></div>
<div class="r" style="left:275px;top:175px;width:296px;height:25px;background:#1c1819;"></div>
<div class="r" style="left:275px;top:200px;width:296px;height:1px;background:#e2001a;"></div>
<span class="t" style="left:282.20px;top:180.75px;font-size:14px;line-height:14px;color:#fff;font-weight:bold;transform:scaleX(0.9653);">GBPUSD</span>
<svg class="r" style="left:551.5px;top:182px" width="10.5" height="10.5" viewBox="0 0 11 11"><path d="M1.700 1.700L9.300 9.300M9.300 1.700L1.700 9.300" stroke="#fff" stroke-width="3" fill="none"/></svg>
<div class="r" style="left:276px;top:201px;width:294px;height:72px;background:#f0f0ea;"></div>
<div class="r" style="left:276px;top:273px;width:294px;height:1px;background:#d9d9d3;"></div>
<span class="t" style="left:288.70px;top:213.84px;font-size:12px;line-height:12px;color:#3a3a3a;font-weight:bold;transform:scaleX(0.9288);">Strategy:</span>
<span class="t" style="left:430.70px;top:213.84px;font-size:12px;line-height:12px;color:#3a3a3a;font-weight:bold;transform:scaleX(0.9356);">Settlement account:</span>
<div class="r inp2" style="left:288px;top:235px;width:127px;height:25px"></div>
<span class="t" style="left:297.30px;top:242.69px;font-size:11px;line-height:11px;color:#222;transform:scaleX(0.9830);-webkit-text-stroke:0.25px;">Single Order</span>
<svg class="r" style="left:398px;top:246px" width="7" height="5" viewBox="0 0 7 5"><path d="M0 0H7L3.500 5Z" fill="#777"/></svg>
<div class="r inp2" style="left:430px;top:235px;width:127px;height:25px"></div>
<span class="t" style="left:439.80px;top:242.69px;font-size:11px;line-height:11px;color:#222;transform:scaleX(0.9849);-webkit-text-stroke:0.25px;">Account 1</span>
<svg class="r" style="left:540px;top:246px" width="7" height="5" viewBox="0 0 7 5"><path d="M0 0H7L3.500 5Z" fill="#777"/></svg>
<div class="r inp2" style="left:296px;top:286px;width:254px;height:25px"></div>
<span class="t" style="left:305.60px;top:293.69px;font-size:11px;line-height:11px;color:#222;transform:scaleX(1.0635);-webkit-text-stroke:0.25px;">Take-Profit</span>
<svg class="r" style="left:533px;top:297px" width="7" height="5" viewBox="0 0 7 5"><path d="M0 0H7L3.500 5Z" fill="#777"/></svg>
<div class="r inp2" style="left:296px;top:324px;width:48px;height:26px"></div>
<span class="t" style="left:302.70px;top:330.30px;font-size:13px;line-height:13px;color:#222;transform:scaleX(0.8267);-webkit-text-stroke:0.2px;">SELL</span>
<svg class="r" style="left:331.3px;top:331.6px" width="7" height="10" viewBox="0 0 7 10"><path d="M0 4L3.500 0L7 4ZM0 6L3.500 10L7 6Z" fill="#222"/></svg>
<div class="r inp2" style="left:352px;top:324px;width:113px;height:26px;border-color:#b9b9b5;box-shadow:inset 0 1px 1px rgba(0,0,0,.12)"></div>
<span class="t" style="left:360.50px;top:331.34px;font-size:12px;line-height:12px;color:#222;transform:scaleX(0.8689);">1m</span>
<div class="r" style="left:376.3px;top:331px;width:1px;height:13px;background:#222;"></div>
<div class="r inp2" style="left:473px;top:324px;width:48px;height:26px"></div>
<span class="t" style="left:479.70px;top:330.30px;font-size:13px;line-height:13px;color:#222;transform:scaleX(0.8128);-webkit-text-stroke:0.2px;">GBP</span>
<svg class="r" style="left:508.3px;top:331.6px" width="7" height="10" viewBox="0 0 7 10"><path d="M0 4L3.500 0L7 4ZM0 6L3.500 10L7 6Z" fill="#222"/></svg>
<span class="t" style="left:296.70px;top:369.47px;font-size:11.5px;line-height:11.5px;color:#3a3a3a;font-weight:bold;transform:scaleX(0.8939);">TARGET:</span>
<div class="r inp2" style="left:352px;top:362px;width:113px;height:26px"></div>
<span class="t" style="left:475.70px;top:369.48px;font-size:10.3px;line-height:10.3px;color:#444;transform:scaleX(0.9121);">1.52</span>
<span class="t" style="left:495.00px;top:366.77px;font-size:13.5px;line-height:13.5px;color:#444;transform:scaleX(0.8444);">714</span>
<svg class="r" style="left:519px;top:371.500px" width="8" height="6" viewBox="0 0 8 6"><path d="M0.700 0.900L4 4.400L7.300 0.900" stroke="#c8202a" stroke-width="1.800" fill="none"/></svg>
<div class="r inp2" style="left:296px;top:404px;width:254px;height:46px"></div>
<span class="t" style="left:303.20px;top:411.00px;font-size:13px;line-height:13px;color:#555;transform:scaleX(0.9277);">Comment</span>
<svg class="r" style="left:541px;top:441px" width="7" height="7" viewBox="0 0 7 7"><path d="M0.500 6.500L6.500 0.500M3.500 6.500L6.500 3.500" stroke="#666" stroke-width="0.800"/></svg>
<div class="r" style="left:276px;top:551px;width:294px;height:64px;background:#f0f0ea;border-top:1px solid #d9d9d3;box-sizing:border-box;"></div>
<div class="r" style="left:399px;top:525px;width:56px;height:27px;overflow:hidden"><div class="r" style="left:0;top:0.800px;width:56px;height:56px;border-radius:28px;background:#e8e8e7;border:1px solid #dcdcd6;box-sizing:border-box"></div></div>
<svg class="r" style="left:418px;top:531px" width="18" height="18" viewBox="0 0 18 18"><rect x="1.500" y="6.200" width="15.100" height="10" fill="#f0f0ef" stroke="#5c5c5c" stroke-width="1.200"/><rect x="0.900" y="3.200" width="2.100" height="3.500" fill="#5c5c5c"/><rect x="15.100" y="3.200" width="2.100" height="3.500" fill="#5c5c5c"/><rect x="7.100" y="3.200" width="3.900" height="3" fill="#5c5c5c"/><rect x="3.900" y="1.100" width="2.100" height="3.900" fill="#5c5c5c"/><rect x="12.200" y="1.100" width="2.100" height="3.900" fill="#5c5c5c"/><text x="9.200" y="13.900" font-size="6.600" font-weight="bold" font-family="Liberation Sans, sans-serif" text-anchor="middle" fill="#5c5c5c">17</text></svg>
<div class="r" style="left:468px;top:564px;width:90px;height:39px;background:#8a8985;border-radius:2px;border:1px solid #7c7b77;box-sizing:border-box;"></div>
<span class="t" style="left:495.70px;top:576.62px;font-size:12.5px;line-height:12.5px;color:#f4f4f0;font-weight:bold;transform:scaleX(0.8330);">Submit</span>
</body></html>
